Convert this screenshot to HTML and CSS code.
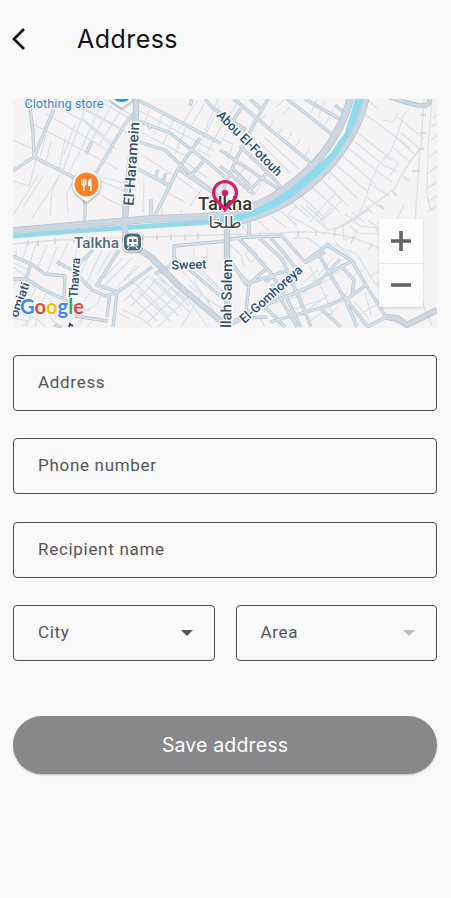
FILE: index.html
```html
<!DOCTYPE html>
<html lang="en">
<head>
<meta charset="utf-8">
<title>Address</title>
<link rel="stylesheet" href="styles.css">
</head>
<body>
<header class="topbar">
  <svg class="back" viewBox="0 0 16 24" aria-hidden="true"><path d="M14 2 4 12 14 22"/></svg>
  <h1>Address</h1>
</header>
<main>
  <div class="map">
    <svg class="tiles" viewBox="13 99 424 228.5">
      <defs>
        <path id="streets" d="M29 99L33 132L34 157L71 176L84 184M58 99L34 157L13 171M85 175V215L84 222M96 173L125 124L136 111M86 154L92 141M136 100L146 104L220 143M139 121L170 133L205 160L225 177M139 142L165 150L190 174L222 198M138 169L170 186L155 215M151 199V219L149 221M205 99L214 109L246 130M268 99L255 122L236 160L221 195M234 99L260 121L312 164M250 99L262 110M287 99L334 136M305 99L343 121M335 105L343 112L349 107M200 138L178 169L160 206M178 169L222 199M220 150L260 177L289 196M240 146L273 178L281 187M220 166L254 194M222 198L238 205M266 174L248 192M234 170L250 186M203 162L188 178M191 151L197 142M148 125L151 129M155 178L158 170M163 181L166 173M192 99L190 106M228 130L241 108M13 256L31 264L45 274L65 276L64 297M31 264L26 279L13 279M57 262L66 267L73 270L93 250M73 270L92 290L106 296L118 292L152 267M119 250L97 285L118 292M110 293L107 317M117 293L113 327M26 279L44 290L68 301M75 316L108 321M68 301L82 317M62 327L54 325M174 260V246L226 241M174 260L170 266L155 274M166 270L162 274M174 258L190 270L225 300M249 220L249 237L230 239M249 237L282 236L305 262L327 245L352 261M239 238L270 272L286 297L301 327M258 237L282 259L305 312L311 327M270 237L297 269M317 252L346 301L357 327M289 270L246 284L232 263M249 284L267 268M249 284L246 312L230 325M246 312L296 293L320 281L340 259M259 308L320 282M270 322L320 308L350 297L366 285M352 261L366 285L386 317L405 324M340 265L354 280L352 295M258 300L285 327M320 308L341 327M342 294L368 327M331 272L350 262M272 284L297 327M225 258L249 284M265 282L272 277M325 252L304 263M230 325L244 318L268 317M386 317L367 327"/>
        <path id="lanes" d="M13 140L33 149M33 124L118 169M45 113L72 129L112 153M50 103L85 122L116 149M64 99L135 137M77 104L120 128M83 119L113 143M96 99L136 122M104 99L137 118M75 124L64 154M84 112L62 173M100 107L77 158M112 105L92 139M125 104L99 145M46 135L40 157M51 142L45 165M65 138L59 171M76 158L68 175M13 181L29 186L36 160M23 207L43 176M13 215L39 174M32 218L56 181L60 174M50 215L52 191L60 175M68 213L67 194L74 179M91 190L123 207M98 180L124 191M101 177L136 186M138 110L214 151M141 132L186 156M138 152L174 176M150 109L142 127M163 114L154 135M174 119L163 144M187 125L175 154M197 101L179 129M205 103L190 128M220 106L202 141M218 99L205 131M224 121L207 153M236 113L220 145M231 99L252 113M240 99L220 129M246 103L234 121M285 99L276 107M290 107L282 115M317 99L311 113M325 102L318 118M333 110L325 125M341 119L333 132M260 120L265 115M269 128L274 120M278 135L283 127M286 141L292 133M295 148L300 140M305 156L310 148M264 137L299 169M259 142L291 174M255 151L282 173M220 138L233 144L228 159M226 151L240 167M196 149L210 156M184 161L207 178M174 174L204 197M165 192L185 202M144 182L143 212M162 205V219M181 210V221M204 186L190 206M215 191L204 210M246 166L235 180M252 175L242 190M262 182L255 194M359 110L377 123L410 148M367 99L377 108M358 133L392 160M354 141L387 168M348 148L383 176M343 156L376 185M334 163L368 192M326 168L358 199M318 176L348 206M308 184L340 212M298 193L325 218M289 200L309 218M398 113L393 122L382 120M410 108L403 116L398 133L391 151L378 166L370 184L364 203L355 222M397 117L404 122M405 123L424 139M401 133L418 147M398 139L414 154M394 148L410 162M392 157L398 164L389 177M387 166L397 172M378 172L392 182M369 184L390 196M366 197L382 208M365 206L372 213M352 212L364 222M345 214L362 227M341 201L331 212L319 223M328 186L336 193L324 205L310 222M331 167L329 180M432 99L428 149L427 195L431 211M433 119L437 114M431 127L437 123M431 140L437 135M429 157L437 151M428 173L437 167M427 188L437 182M427 202L437 196M428 211L437 206M300 205L328 230L343 226L370 209M306 205L321 219L332 207M315 211L325 225M297 206L288 215L325 235M281 211L297 226M271 216L287 228M255 218L269 231M241 222L247 233M234 226L243 240M349 225L358 233L381 234L396 246M363 226L382 229M343 227L344 240L357 236M368 220L392 240M404 205L397 219L376 231M293 238L308 238L324 250M325 242L337 246L357 254L372 279L390 302M335 242L356 263M364 269L352 277M370 276L397 262M375 285L394 271M383 297L406 281M376 303L390 293M235 237L250 251L267 264M227 242L241 255L244 266M245 254L251 247L258 255L251 263ZM280 270L303 300M309 266L325 295L333 315M318 270L300 285M333 258L318 276M312 281L343 270M301 293L334 277M300 316L328 295M309 322L348 292M289 311L320 300M286 301L308 292M260 318L265 327M277 315L279 327M337 308L328 317M354 301L369 319M365 293L371 315M376 305L352 319M16 248L16 257M27 245L22 261M36 244L29 265M47 245L37 269M57 247L47 273M68 243L57 267M78 246L72 268M92 248L80 276M102 250L87 282M111 251L97 274M112 294L136 265M100 290L132 258M104 278L123 258M124 281L139 266M118 289L135 283L168 316M124 301L148 276L181 307M131 306L158 278L187 300M138 315L173 286M148 322L181 291M158 327L188 297M130 295L157 321M138 291L170 321M145 284L179 316M152 277L191 313M158 275L189 306M123 310L142 319L152 327M119 313L129 319M175 263L210 303M188 262L224 294M200 269L223 291M207 247L207 264M194 249L194 262M188 285L226 312M181 290L208 327M194 281L220 321M202 293L181 327M13 263L29 270M13 267L27 277M17 279L13 288M37 286L31 298M47 292L37 311M54 295L43 314M60 301L55 319M16 312L36 318L45 327M21 307L24 316M32 312L26 327M13 318L28 321L22 327M37 318L35 327M49 316L59 326M83 318L78 327M93 320L87 327M91 293L79 307L90 311M101 296L97 304L80 315"/>
        <path id="avenues" d="M136 95V114L126 200L125 224V240L152 258L178 285L228 327M227 218V330M386 317L397 318L407 325L437 310"/>
        <path id="loop" d="M386 96L405 102Q420 107 427 105Q430 104 430 95"/>
        <path id="corniche" d="M8 231.500L80 225L150 219L200 217Q245 216 282 191Q321 164 338 130Q348 111 351 94"/>
        <path id="bank" d="M234 223Q262 217 290 201Q327 177 349 141Q364 116 367 94"/>
      </defs>
      <rect class="land" x="13" y="99" width="424" height="229"/>
      <use href="#lanes" class="lane"/>
      <path class="rail" d="M13 244L58 240L150 237L280 233Q328 229 359 240Q406 255 422 303L432 325M424 99L421 148Q404 168 395 188Q363 214 334 230M420 151L416 206L414 240Q413 270 425 310"/>
      <path class="ties" d="M28 240V246M38 240V246M55 238V244M74 237V243M90 236V242M143 234V240M157 234V240M171 234V240M185 234V240M198 233V239M260 232V239M298 231V237M316 230V236M335 230L334 237M354 236L351 243M372 244L369 250M389 254L385 260M401 266L396 271M411 280L406 284M418 294L413 297M420 115H426M420 133H426M418 149H424M412 171H420M403 176L409 181M392 191L397 196M380 205L384 209"/>
      <use href="#streets" class="street-edge"/>
      <use href="#streets" class="street"/>
      <use href="#loop" class="loop-edge"/>
      <use href="#loop" class="loop"/>
      <use href="#avenues" class="avenue-edge"/>
      <use href="#avenues" class="avenue"/>
      <use href="#corniche" class="corniche-edge"/>
      <use href="#bank" class="bank-edge"/>
      <use href="#corniche" class="corniche"/>
      <use href="#bank" class="bank"/>
      <path class="river" d="M13 234L85 228.500L150 223.500L205 220Q243 216 266 204Q289 191 303 178L331 153L338 142L345 133L348 122L355 99H364L356 121L348 137L340 151Q325 171 308 184Q290 199 275 207Q252 219 224 223.500L150 228.500L75 233.500L13 238.500Z"/>
      <path class="avenue" d="M125 218V242M227 216V230"/>

      <g class="labels">
        <text class="shop" x="24.5" y="107.5" textLength="79" lengthAdjust="spacingAndGlyphs">Clothing store</text>
        <text class="road" transform="translate(133.5 206) rotate(-86)" font-size="14.5" textLength="84" lengthAdjust="spacingAndGlyphs">El-Haramein</text>
        <text class="road blue" transform="translate(216 116) rotate(45)" font-size="13" textLength="86" lengthAdjust="spacingAndGlyphs">Abou El-Fotouh</text>
        <text class="road blue" transform="translate(171.5 269.5) rotate(-2)" font-size="12.5" textLength="35" lengthAdjust="spacingAndGlyphs">Sweet</text>
        <text class="road blue" transform="translate(244.5 324) rotate(-42)" font-size="13" textLength="79" lengthAdjust="spacingAndGlyphs">El-Gomhoreya</text>
        <text class="road blue" transform="translate(77.5 298) rotate(-86)" font-size="12.5" textLength="40" lengthAdjust="spacingAndGlyphs">Thawra</text>
        <text class="road blue" transform="translate(17.5 318) rotate(-70)" font-size="12.5" textLength="36" lengthAdjust="spacingAndGlyphs">omiati</text>
        <text class="road" transform="translate(231 328) rotate(-89)" font-size="14.5" textLength="69" lengthAdjust="spacingAndGlyphs">llah Salem</text>
        <text class="station" x="74" y="247.5" textLength="45" lengthAdjust="spacingAndGlyphs">Talkha</text>
        <text class="city" x="198" y="209.500" textLength="54" lengthAdjust="spacingAndGlyphs">Talkha</text>
        <text class="arabic" x="225" y="228" text-anchor="middle" textLength="33" lengthAdjust="spacingAndGlyphs">طلخا</text>
      </g>
      <path class="road-mark" d="M69 327L70 324L73 326"/>

      <g class="poi">
        <path d="M86.500 202.500L80 197A14 14 0 1 1 93 197Z" fill="#fff"/>
        <circle cx="86.500" cy="184.500" r="12" fill="#ff7f27"/>
        <path d="M81.800 179v4q0 2.300 2 2.300t2-2.300v-4M83.800 179v12" fill="none" stroke="#fff" stroke-width="1.500"/>
        <path d="M91.500 178.500V191H90V186H88V182Q88 179 91.500 178.500Z" fill="#fff"/>
      </g>
      <g class="poi">
        <path d="M108 95Q111 102 116 104L121.500 108L127 104Q132 102 135 95Z" fill="#fff"/>
        <circle cx="121.500" cy="90" r="12" fill="#159bff"/>
      </g>
      <g class="poi">
        <rect x="123" y="232.500" width="19" height="19" rx="5.500" fill="#fff"/>
        <rect x="124" y="233.500" width="17" height="17" rx="4.500" fill="#4f6a7e"/>
        <path d="M130 236.500h5q3 0 3 3v4.500q0 2.500-2.500 2.500h-6q-2.500 0-2.500-2.500v-4.500q0-3 3-3Z" fill="#fff"/>
        <path d="M129 239h3v3h-3zM133.500 239h3v3h-3zM129 244h2v1.500h-2zM134.500 244h2v1.500h-2z" fill="#4f6a7e"/>
        <path d="M129 247l-1.500 2M136 247l1.500 2" stroke="#fff" stroke-width="1.200"/>
      </g>
      <path class="pin" d="M225 209.500Q221 204.500 216.500 200.500A11.400 11.400 0 1 1 233.500 200.500Q229 204.500 225 209.500Z"/>
      <circle cx="225" cy="193" r="3.200" fill="#d61c6b"/>
      <path d="M220 204.500Q225 208 230 204.500L225 212Z" fill="#d61c6b"/>
      <text class="logo" x="20" y="314" textLength="64" lengthAdjust="spacingAndGlyphs"><tspan fill="#4285f4">G</tspan><tspan fill="#ea4335">o</tspan><tspan fill="#fbbc04">o</tspan><tspan fill="#4285f4">g</tspan><tspan fill="#34a853">l</tspan><tspan fill="#ea4335">e</tspan></text>
    </svg>
    <div class="zoom" aria-label="Map zoom">
      <button aria-label="Zoom in"><svg viewBox="0 0 20 20"><path d="M0 10H20M10 0V20"/></svg></button>
      <button aria-label="Zoom out"><svg viewBox="0 0 20 20"><path d="M0 10H20"/></svg></button>
    </div>
  </div>
  <form>
    <div class="field">Address</div>
    <div class="field">Phone number</div>
    <div class="field">Recipient name</div>
    <div class="row">
      <div class="field select">City<span class="caret"></span></div>
      <div class="field select">Area<span class="caret off"></span></div>
    </div>
    <button class="save" type="button">Save address</button>
  </form>
</main>
</body>
</html>
```
FILE: styles.css
```css
* { box-sizing: border-box; }
body {
  margin: 0;
  height: 898px;
  overflow: hidden;
  background: #f9f9f9;
  font-family: Roboto, "Liberation Sans", sans-serif;
  color: #101419;
}
.topbar {
  height: 99px;
  padding: 0 11px 21px 10px;
  display: flex;
  align-items: center;
}
.back { width: 16px; height: 24px; fill: none; stroke: #101419; stroke-width: 2.7; }
h1 {
  margin: 0 0 0 51px;
  font-family: Inter, sans-serif;
  font-size: 25px;
  line-height: 32px;
  font-weight: 400;
  letter-spacing: 0.45px;
}
main { padding: 0 14px 0 13px; }
.map { position: relative; height: 228.500px; overflow: hidden; }
.tiles { display: block; width: 100%; height: 100%; }
.land { fill: #f5f3f4; }
.lane, .street, .street-edge, .loop, .loop-edge, .avenue, .avenue-edge, .corniche, .corniche-edge, .bank, .bank-edge, .rail, .ties { fill: none; stroke-linejoin: round; }
.lane { stroke: #d5e0e8; stroke-width: 1.100; }
.street-edge { stroke: #b4c2d0; stroke-width: 3.300; }
.street { stroke: #d5e0e9; stroke-width: 2; }
.loop-edge { stroke: #adbac9; stroke-width: 4.600; }
.loop { stroke: #ccd7e2; stroke-width: 3.400; }
.avenue-edge { stroke: #adbac9; stroke-width: 6.200; }
.avenue { stroke: #ccd7e2; stroke-width: 5; }
.corniche-edge { stroke: #adbac9; stroke-width: 7.500; }
.corniche { stroke: #cbd6e1; stroke-width: 6.300; }
.bank-edge { stroke: #adbac9; stroke-width: 6.200; }
.bank { stroke: #cbd6e1; stroke-width: 5; }
.river { fill: #90daec; }
.rail { stroke: #dedfe0; stroke-width: 1.300; }
.ties { stroke: #d4d5d6; stroke-width: 1.400; }
.labels text { font-family: Roboto, sans-serif; paint-order: stroke; stroke: #fff; stroke-width: 2.500px; stroke-linejoin: round; }
.road { font-weight: 500; fill: #37516b; }
.road.blue { fill: #2a4b73; }
.labels .shop { font-size: 12.500px; fill: #2d7ce5; }
.labels .station { font-size: 15.500px; font-weight: 500; fill: #4f6a7e; }
.labels .city { font-size: 18.500px; font-weight: 500; fill: #333; }
.labels .arabic { font-family: "DejaVu Sans", sans-serif; font-size: 16px; fill: #444; }
.road-mark { fill: none; stroke: #2a4b73; stroke-width: 2; }
.poi { filter: drop-shadow(0 1px 1px rgba(0, 0, 0, .4)); }
.pin { fill: none; stroke: #d61c6b; stroke-width: 3.200; }
.logo { font-family: Lato, sans-serif; font-size: 21.500px; font-weight: 700; paint-order: stroke; stroke: #fff; stroke-width: 2px; }
.zoom {
  position: absolute;
  right: 14px;
  top: 120px;
  width: 44px;
  height: 88px;
  background: rgba(255, 255, 255, .82);
  box-shadow: 0 1px 2px rgba(0, 0, 0, .16);
}
.zoom button {
  display: flex;
  width: 44px;
  height: 44px;
  padding: 0 1px 1px 0;
  border: 0;
  background: none;
  align-items: center;
  justify-content: center;
}
.zoom button + button { border-top: 1px solid #e6e6e6; }
.zoom svg { width: 20px; height: 20px; fill: none; stroke: #666; stroke-width: 3.600; }
form { display: flex; flex-direction: column; gap: 27.300px; padding-top: 27.500px; }
.field {
  height: 56px;
  flex: 1 0 56px;
  padding: 0 24px 2px;
  border: 1px solid #4c4c4c;
  border-radius: 4px;
  display: flex;
  align-items: center;
  font-size: 17px;
  line-height: 20px;
  letter-spacing: 0.7px;
  color: #555;
}
.row { display: flex; gap: 21px; }
.select { flex: 1 1 0; justify-content: space-between; padding-right: 21px; }
.caret { border: 6px solid transparent; border-top-color: #555; border-bottom: 0; margin-top: 3px; }
.caret.off { border-top-color: #bdbdbd; }
.save {
  height: 57.500px;
  margin-top: 28px;
  border: 0;
  border-radius: 29px;
  background: #878889;
  box-shadow: 0 1px 2px rgba(0, 0, 0, .25);
  color: #fff;
  font: 400 19.500px/24px Inter, sans-serif;
  letter-spacing: 0.15px;
}
```
